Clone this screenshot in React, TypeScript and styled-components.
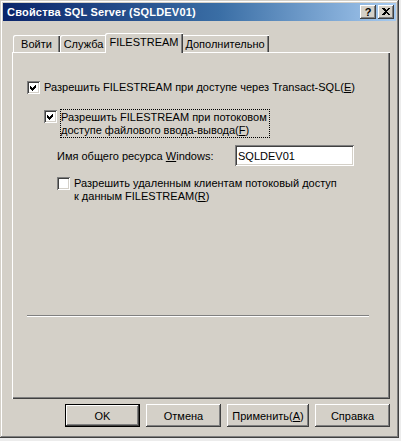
import React from "react";
import styled, { createGlobalStyle } from "styled-components";

const Global = createGlobalStyle`
  html, body { margin: 0; padding: 0; background: #ececec; }
  body { font-family: "Liberation Sans", Arial, sans-serif; font-size: 11px; color: #000; }
`;

const Window = styled.div`
  width: 399px;
  height: 438px;
  box-sizing: border-box;
  padding: 3px;
  background: #d4d0c8;
  box-shadow: inset -1px -1px #404040, inset 1px 1px #d4d0c8, inset -2px -2px #808080, inset 2px 2px #fff;
  display: flex;
  flex-direction: column;
`;

const TitleBar = styled.div`
  height: 18px;
  flex: none;
  background: linear-gradient(90deg, #0a246a 0%, #3a6ea5 55%, #a6caf0 100%);
  display: flex;
  align-items: center;
  justify-content: space-between;
  padding: 0 2px 0 4px;
`;

const Title = styled.span`
  color: #fff;
  font-weight: bold;
  font-size: 11px;
  letter-spacing: 0.2px;
  white-space: nowrap;
`;

const CaptionButtons = styled.div`
  display: flex;
  gap: 2px;
`;

const CaptionButton = styled.div`
  width: 16px;
  height: 14px;
  box-sizing: border-box;
  background: #d4d0c8;
  box-shadow: inset -1px -1px #404040, inset 1px 1px #fff, inset -2px -2px #808080;
  display: flex;
  align-items: center;
  justify-content: center;
  font-weight: bold;
  font-size: 11px;
  line-height: 14px;
  padding-bottom: 1px;
`;

const Body = styled.div`
  padding: 12px 0 0 9px;
  display: flex;
  flex-direction: column;
`;

const TabStrip = styled.div`
  height: 19px;
  display: flex;
  align-items: flex-end;
  padding-left: 1px;
  position: relative;
  z-index: 1;
`;

const Tab = styled.div<{ $w: number; $active?: boolean }>`
  width: ${(p) => p.$w}px;
  height: ${(p) => (p.$active ? 20 : 17)}px;
  margin: ${(p) => (p.$active ? "0 -2px -1px -2px" : "0")};
  padding: ${(p) => (p.$active ? "0 2px" : "0")};
  box-sizing: content-box;
  background: #d4d0c8;
  box-shadow: inset 1px 1px #fff, inset -1px 0 #404040, inset -2px 0 #808080;
  border-top-left-radius: 2px;
  display: flex;
  align-items: ${(p) => (p.$active ? "flex-start" : "center")};
  padding-top: ${(p) => (p.$active ? 3 : 0)}px;
  ${(p) => (p.$active ? "height: 17px; position: relative; z-index: 2;" : "")}
  justify-content: center;
  white-space: nowrap;
`;

const Panel = styled.div`
  width: 378px;
  height: 347px;
  box-sizing: border-box;
  padding: 29px 0 0 15px;
  box-shadow: inset 1px 1px #fff, inset -1px -1px #404040, inset -2px -2px #808080;
  display: flex;
  flex-direction: column;
`;

const CheckRow = styled.div<{ $indent: number; $top: number }>`
  display: flex;
  align-items: flex-start;
  gap: 4px;
  margin-left: ${(p) => p.$indent}px;
  margin-top: ${(p) => p.$top}px;
`;

const CheckBox = styled.span<{ $offset?: number }>`
  width: 13px;
  height: 13px;
  flex: none;
  box-sizing: border-box;
  background: #fff;
  box-shadow: inset 1px 1px #808080, inset -1px -1px #fff, inset 2px 2px #404040, inset -2px -2px #d4d0c8;
  margin-top: ${(p) => p.$offset ?? 0}px;
  display: flex;
  align-items: center;
  justify-content: center;
`;

const Label = styled.span`
  line-height: 13px;
  white-space: nowrap;
`;

const FocusLabel = styled.span`
  line-height: 13px;
  white-space: nowrap;
  border: 1px dotted #000;
  padding: 1px 2px 0 0;
  margin-left: -1px;
`;

const U = styled.span`
  text-decoration: underline;
`;

const FieldRow = styled.div`
  display: flex;
  align-items: center;
  margin: 7px 0 0 30px;
  height: 21px;
`;

const FieldLabel = styled.span`
  width: 178px;
  white-space: nowrap;
`;

const TextBox = styled.div`
  width: 119px;
  height: 21px;
  box-sizing: border-box;
  background: #fff;
  box-shadow: inset 1px 1px #808080, inset -1px -1px #fff, inset 2px 2px #404040, inset -2px -2px #d4d0c8;
  padding-left: 3px;
  display: flex;
  align-items: center;
`;

const Separator = styled.div`
  width: 342px;
  height: 0;
  margin-top: 112px;
  border-top: 1px solid #808080;
  border-bottom: 1px solid #fff;
`;

const ButtonRow = styled.div`
  width: 378px;
  display: flex;
  justify-content: flex-end;
  gap: 6px;
  margin-top: 5px;
`;

const Button = styled.div<{ $w: number; $default?: boolean }>`
  width: ${(p) => p.$w}px;
  height: 23px;
  box-sizing: border-box;
  background: #d4d0c8;
  border: ${(p) => (p.$default ? "1px solid #000" : "none")};
  box-shadow: inset -1px -1px #404040, inset 1px 1px #fff, inset -2px -2px #808080;
  display: flex;
  align-items: center;
  justify-content: center;
  white-space: nowrap;
`;

const Check = () => (
  <svg width="7" height="7" viewBox="0 0 7 7" shapeRendering="crispEdges">
    <polygon points="0,2 2,4 6,0 6,3 2,7 0,5" fill="#000" />
  </svg>
);

const CloseGlyph = () => (
  <svg width="8" height="7" viewBox="0 0 8 7" shapeRendering="crispEdges">
    <path d="M0 0h2l2 2 2-2h2L5 3.5 8 7H6L4 5 2 7H0l3-3.5z" fill="#000" />
  </svg>
);

export default function App() {
  return (
    <>
      <Global />
      <Window>
        <TitleBar>
          <Title>Свойства SQL Server (SQLDEV01)</Title>
          <CaptionButtons>
            <CaptionButton>?</CaptionButton>
            <CaptionButton>
              <CloseGlyph />
            </CaptionButton>
          </CaptionButtons>
        </TitleBar>
        <Body>
          <TabStrip>
            <Tab $w={47}>Войти</Tab>
            <Tab $w={47}>Служба</Tab>
            <Tab $w={74} $active>
              FILESTREAM
            </Tab>
            <Tab $w={88}>Дополнительно</Tab>
          </TabStrip>
          <Panel>
            <CheckRow $indent={0} $top={0}>
              <CheckBox>
                <Check />
              </CheckBox>
              <Label>
                Разрешить FILESTREAM при доступе через Transact-SQL(<U>E</U>)
              </Label>
            </CheckRow>
            <CheckRow $indent={17} $top={15}>
              <CheckBox $offset={1}>
                <Check />
              </CheckBox>
              <FocusLabel>
                Разрешить FILESTREAM при потоковом
                <br />
                доступе файлового ввода-вывода(<U>F</U>)
              </FocusLabel>
            </CheckRow>
            <FieldRow>
              <FieldLabel>
                Имя общего ресурса <U>W</U>indows:
              </FieldLabel>
              <TextBox>SQLDEV01</TextBox>
            </FieldRow>
            <CheckRow $indent={30} $top={11}>
              <CheckBox />
              <Label>
                Разрешить удаленным клиентам потоковый доступ
                <br />к данным FILESTREAM(<U>R</U>)
              </Label>
            </CheckRow>
            <Separator />
          </Panel>
          <ButtonRow>
            <Button $w={75} $default>
              OK
            </Button>
            <Button $w={75}>Отмена</Button>
            <Button $w={82}>
              Применить(<U>А</U>)
            </Button>
            <Button $w={75}>Справка</Button>
          </ButtonRow>
        </Body>
      </Window>
    </>
  );
}
